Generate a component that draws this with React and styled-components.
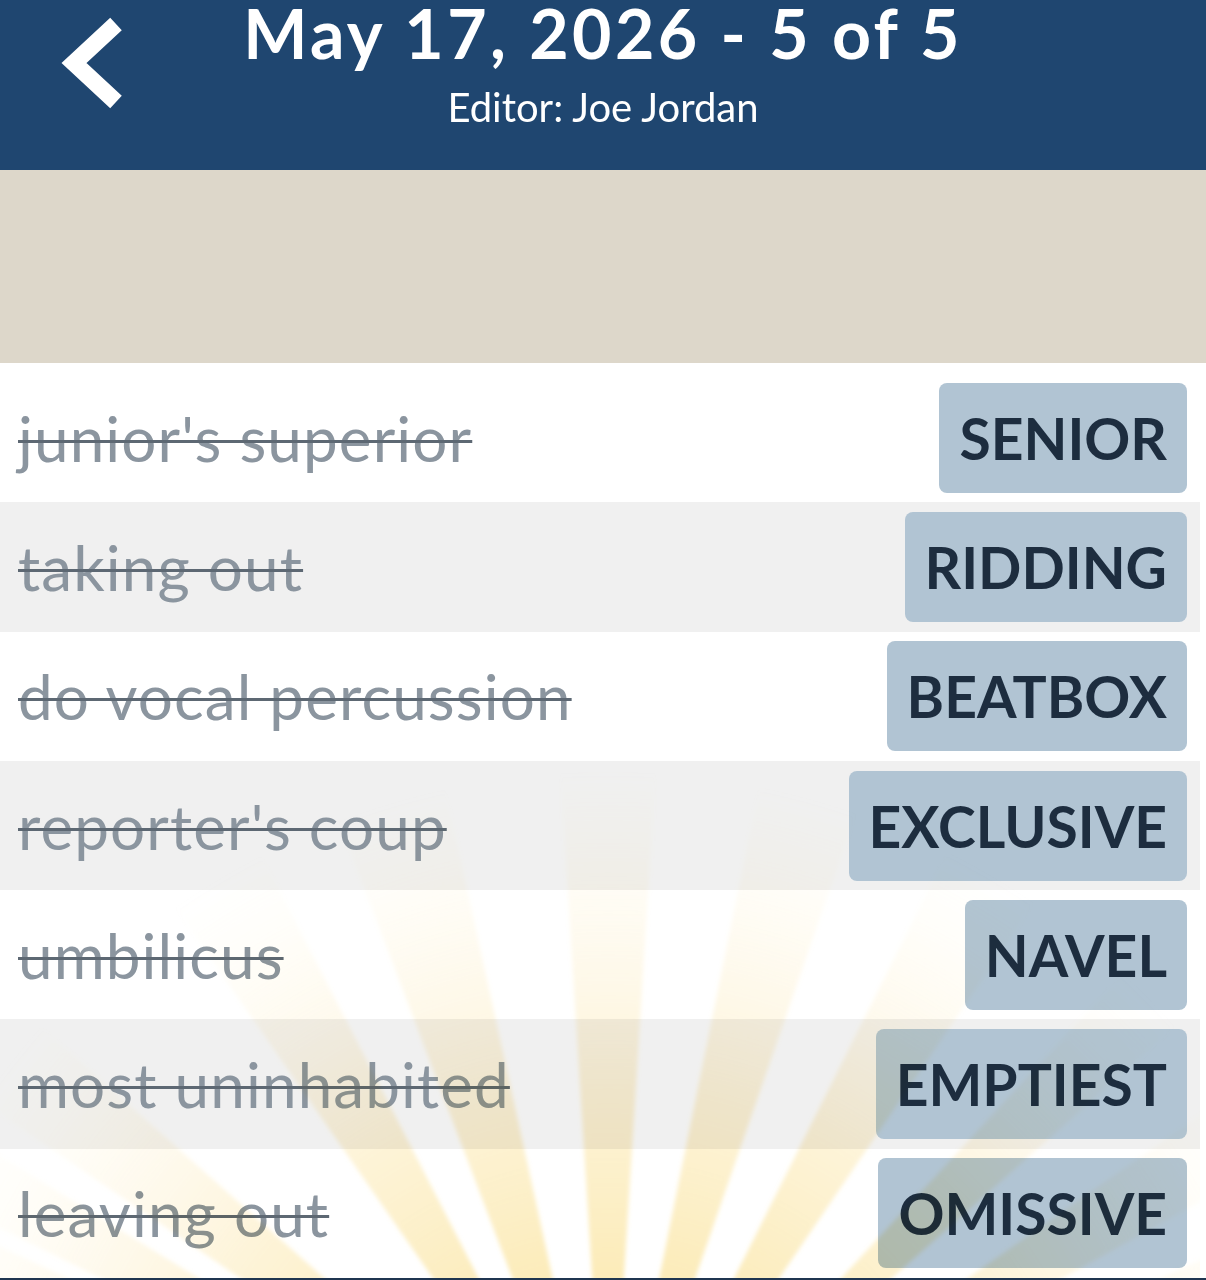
import React from "react";
import styled, { createGlobalStyle } from "styled-components";

const clues = [
  { clue: "junior's superior", answer: "SENIOR" },
  { clue: "taking out", answer: "RIDDING" },
  { clue: "do vocal percussion", answer: "BEATBOX" },
  { clue: "reporter's coup", answer: "EXCLUSIVE" },
  { clue: "umbilicus", answer: "NAVEL" },
  { clue: "most uninhabited", answer: "EMPTIEST" },
  { clue: "leaving out", answer: "OMISSIVE" },
];

// angle (deg from straight up) and half-width of each sun ray
const rays = [
  [-67, 2], [-61, 2.6], [-52, 3.6], [-31, 3.8], [-16.6, 4.2], [0, 3.6],
  [15.3, 3.8], [30.4, 3.8], [45.6, 2.8], [58, 3], [68, 2.5],
];

const SUN_X = 608;
const SUN_Y = 1167;

const GlobalStyle = createGlobalStyle`
  body {
    margin: 0;
    background: #fff;
    font-family: Lato, "Noto Sans", sans-serif;
  }
`;

const Page = styled.div`
  width: 1206px;
  height: 1280px;
  overflow: hidden;
  display: flex;
  flex-direction: column;
`;

const Header = styled.header`
  flex: none;
  height: 170px;
  background: #1f4670;
  color: #fff;
  display: grid;
  grid-template-columns: 1fr auto 1fr;
  align-items: start;
`;

const BackButton = styled.button`
  justify-self: start;
  margin: 16px 0 0 60px;
  padding: 0;
  border: 0;
  background: none;
  cursor: pointer;
  line-height: 0;
`;

const TitleBlock = styled.div`
  text-align: center;
`;

const Title = styled.h1`
  margin: -1px 0 0;
  font-size: 68px;
  font-weight: 700;
  letter-spacing: 3.4px;
  line-height: 1;
`;

const Subtitle = styled.div`
  margin-top: 20px;
  font-size: 40px;
  font-weight: 400;
  line-height: 1;
`;

const Banner = styled.div`
  flex: none;
  height: 193px;
  background: #ddd7ca;
`;

const List = styled.ul`
  position: relative;
  flex: none;
  list-style: none;
  margin: 0 6px 0 0;
  padding: 10px 0 0;
`;

const Row = styled.li`
  box-sizing: border-box;
  height: 129.3px;
  display: flex;
  align-items: center;
  justify-content: space-between;
  padding: 0 13px 0 18px;
  background: ${(p) => (p.$shaded ? "#f0f0f0" : "#fff")};
`;

const Clue = styled.span`
  font-size: 62px;
  letter-spacing: 1.1px;
  color: #8b959f;
  text-decoration: line-through;
  text-decoration-color: #5d6873;
  text-decoration-thickness: 3px;
`;

const Answer = styled.button`
  height: 110px;
  padding: 0 20px;
  border: 0;
  border-radius: 8px;
  background: #b1c4d3;
  color: #1d2d3f;
  font-family: inherit;
  font-size: 57px;
  font-weight: 700;
  cursor: pointer;
`;

const Rays = styled.svg`
  position: absolute;
  left: 0;
  top: 0;
  width: 100%;
  height: 100%;
  pointer-events: none;
  mix-blend-mode: multiply;
`;

const Footer = styled.footer`
  flex: none;
  height: 40px;
  background: #1f3550;
`;

function rayPoints([angle, half]) {
  const r = 1400;
  const a1 = ((angle - half) * Math.PI) / 180;
  const a2 = ((angle + half) * Math.PI) / 180;
  const p = (a) => `${SUN_X + r * Math.sin(a)},${SUN_Y - r * Math.cos(a)}`;
  return `${SUN_X},${SUN_Y} ${p(a1)} ${p(a2)}`;
}

const Chevron = () => (
  <svg width="70" height="96" viewBox="0 0 70 96">
    <path
      d="M56 8 L14 47 L56 86"
      fill="none"
      stroke="#fff"
      strokeWidth="17"
      strokeLinejoin="miter"
    />
  </svg>
);

export default function App() {
  return (
    <>
      <GlobalStyle />
      <Page>
        <Header>
          <BackButton aria-label="Back">
            <Chevron />
          </BackButton>
          <TitleBlock>
            <Title>May 17, 2026 - 5 of 5</Title>
            <Subtitle>Editor: Joe Jordan</Subtitle>
          </TitleBlock>
          <div />
        </Header>
        <Banner />
        <List>
          {clues.map((c, i) => (
            <Row key={c.answer} $shaded={i % 2 === 1}>
              <Clue>{c.clue}</Clue>
              <Answer>{c.answer}</Answer>
            </Row>
          ))}
          <Rays viewBox="0 0 1200 915" preserveAspectRatio="none">
            <defs>
              <radialGradient
                id="sunFade"
                gradientUnits="userSpaceOnUse"
                cx={SUN_X}
                cy={SUN_Y}
                r="760"
              >
                <stop offset="0.3" stopColor="#f9d66a" stopOpacity="0.5" />
                <stop offset="0.6" stopColor="#f9dd88" stopOpacity="0.32" />
                <stop offset="1" stopColor="#fcefc8" stopOpacity="0" />
              </radialGradient>
              <filter id="soften" x="-10%" y="-10%" width="120%" height="120%">
                <feGaussianBlur stdDeviation="2" />
              </filter>
            </defs>
            <g filter="url(#soften)">
              {rays.map((ray) => (
                <polygon key={ray[0]} points={rayPoints(ray)} fill="url(#sunFade)" />
              ))}
            </g>
          </Rays>
        </List>
        <Footer />
      </Page>
    </>
  );
}
